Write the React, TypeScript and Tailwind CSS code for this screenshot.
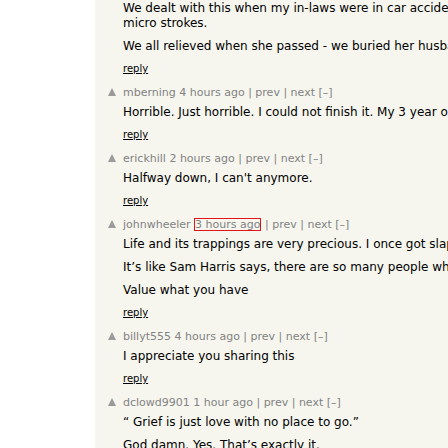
import React from "react";

type CommentProps = {
  user?: string;
  age?: string;
  boxed?: boolean;
  lines: React.ReactNode[];
  first?: boolean;
};

function Arrow() {
  return (
    <svg width="8" height="8" viewBox="0 0 8 8">
      <polygon points="4,0 8,8 0,8" fill="#9a9a9a" />
    </svg>
  );
}

function Comment({ user, age, boxed, lines, first }: CommentProps) {
  return (
    <div className={"flex " + (first ? "" : "mt-[10px]")}>
      <div className="w-[15px] shrink-0 pt-[3px]">{user && <Arrow />}</div>
      <div className="whitespace-nowrap">
        {user && (
          <div className="text-[11px] leading-[15px] text-[#828282] mb-[5px]">
            {user}{" "}
            {boxed ? (
              <span className="border border-[#e2141a] leading-[11px] inline-block">{age}</span>
            ) : (
              <span>{age}</span>
            )}{" "}
            | prev | next [–]
          </div>
        )}
        {lines.map((l, i) => (
          <div key={i} className={"text-[12px] leading-[15px] text-black " + (i > 0 ? "mt-[8px]" : "")}>
            {l}
          </div>
        ))}
        <div className="mt-[8px] text-[10px] leading-[13px] text-black underline">reply</div>
      </div>
    </div>
  );
}

export default function App() {
  return (
    <div
      className="w-[448px] h-[448px] overflow-hidden bg-white flex"
      style={{ fontFamily: '"DejaVu Sans", Verdana, sans-serif' }}
    >
      <div className="w-[95px] shrink-0 bg-white" />
      <div className="flex-1 bg-[#f6f6ef] pl-[13px] pt-px">
        <Comment
          first
          lines={[
            <>
              We dealt with this when my in-laws were in car accidents, and she had
              <br />
              micro strokes.
            </>,
            "We all relieved when she passed - we buried her husband the year before.",
          ]}
        />
        <Comment
          user="mberning"
          age="4 hours ago"
          lines={["Horrible. Just horrible. I could not finish it. My 3 year old is asleep upstairs."]}
        />
        <Comment user="erickhill" age="2 hours ago" lines={["Halfway down, I can't anymore."]} />
        <Comment
          user="johnwheeler"
          age="3 hours ago"
          boxed
          lines={[
            "Life and its trappings are very precious. I once got slapped with a diagnosis.",
            "It’s like Sam Harris says, there are so many people who would trade places with you.",
            "Value what you have",
          ]}
        />
        <Comment user="billyt555" age="4 hours ago" lines={["I appreciate you sharing this"]} />
        <Comment
          user="dclowd9901"
          age="1 hour ago"
          lines={["“ Grief is just love with no place to go.”", "God damn. Yes. That’s exactly it."]}
        />
      </div>
    </div>
  );
}
